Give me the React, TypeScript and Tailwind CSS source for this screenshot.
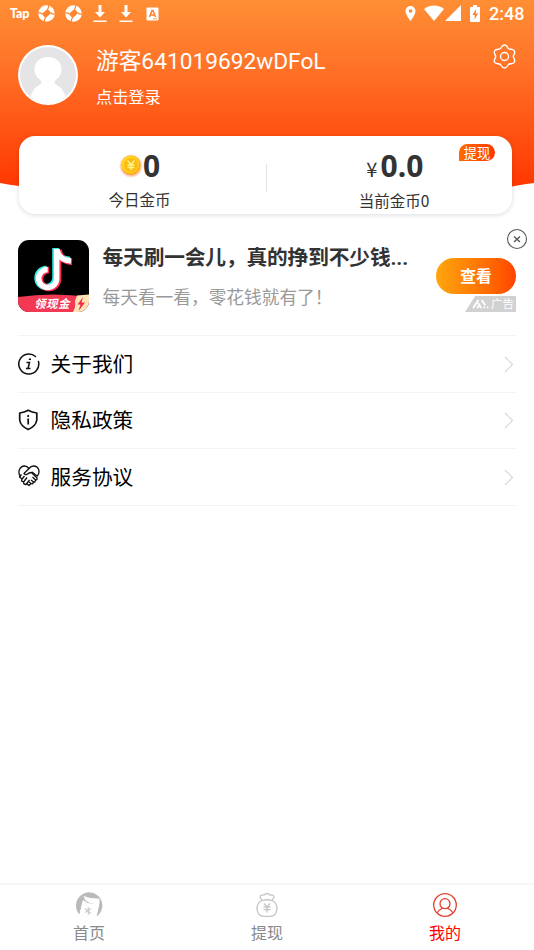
import type { ReactNode } from "react";

export default function App() {
  return (
    <div className="flex h-[950px] w-[534px] flex-col overflow-hidden bg-white font-['Roboto','Noto_Sans_CJK_SC',sans-serif]">
      <Header />
      <Balance />
      <AdCard />
      <ul className="mx-[18px] mt-[23px] border-t border-[#f3f3f3]">
        <MenuRow icon={<InfoIcon />} text="关于我们" />
        <MenuRow icon={<ShieldIcon />} text="隐私政策" />
        <MenuRow icon={<HandshakeIcon />} text="服务协议" />
      </ul>
      <nav className="mt-auto grid h-[67px] shrink-0 grid-cols-3 border-t-2 border-[#f7f7f7]">
        <NavItem icon={<HomeIcon />} text="首页" />
        <NavItem icon={<BagIcon />} text="提现" />
        <NavItem icon={<UserIcon />} text="我的" selected />
      </nav>
    </div>
  );
}

function Header() {
  return (
    <header className="relative h-[136px] shrink-0 text-white">
      <svg className="absolute top-0 left-0" width="534" height="204" viewBox="0 0 534 204">
        <defs>
          <linearGradient id="sky" x1="0" y1="0" x2="0" y2="190" gradientUnits="userSpaceOnUse">
            <stop offset="0" stopColor="#ff8e34" />
            <stop offset="0.3" stopColor="#ff772a" />
            <stop offset="1" stopColor="#ff3600" />
          </linearGradient>
        </defs>
        <path d="M0 0H534V183Q523 184 512 186.500Q267 212 19 186Q10 185 0 183Z" fill="url(#sky)" />
      </svg>
      <div className="relative flex h-[27px] items-center justify-between pr-[9px] pl-[10px]">
        <div className="flex items-center">
          <span className="w-[28px] font-['Lato',sans-serif] text-[12.500px] leading-[22px] font-black tracking-[-0.200px]">
            Tap
          </span>
          <SwirlIcon />
          <SwirlIcon />
          <DownloadIcon />
          <DownloadIcon />
          <svg width="13" height="14" viewBox="0 0 13 14">
            <rect x="0.500" y="0.500" width="12" height="13" rx="1" fill="#fff" />
            <path d="M3.500 10L6 3.500H7L9.500 10M4.500 8H8.500" fill="none" stroke="#ff7f2d" strokeWidth="1.500" />
            <path d="M7 11.800H11" stroke="#ff7f2d" strokeWidth="0.700" />
          </svg>
        </div>
        <div className="flex items-center">
          <svg width="11" height="17" viewBox="0 0 11 17">
            <path
              d="M5.500 1A5 5 0 0 0 .5 6C.5 9.800 5.500 16 5.500 16S10.500 9.800 10.500 6A5 5 0 0 0 5.500 1ZM5.500 7.800A1.800 1.800 0 1 1 5.500 4.200A1.800 1.800 0 0 1 5.500 7.800Z"
              fill="#fff"
            />
          </svg>
          <svg width="20" height="16" viewBox="0 0 20 16" className="mb-px ml-[8px]">
            <path d="M0 4Q4 .500 10 .500T20 4L10 16Z" fill="#fff" />
          </svg>
          <svg width="16" height="16" viewBox="0 0 16 16" className="mb-px ml-[1px]">
            <path d="M0 16L16 0V16Z" fill="#fff" />
          </svg>
          <svg width="10" height="17" viewBox="0 0 10 17" className="mb-px ml-[9px]">
            <path d="M3 0H7V2H9Q10 2 10 3V16Q10 17 9 17H1Q0 17 0 16V3Q0 2 1 2H3Z" fill="#fff" />
            <path d="M6 4L2.500 10H4.700V14.500L8 8.500H5.800Z" fill="#ff812d" />
          </svg>
          <span className="ml-[9px] w-[36px] text-[18px] leading-[27px] font-medium whitespace-nowrap">2:48</span>
        </div>
      </div>
      <div className="relative mt-[18px] flex pl-[18px]">
        <svg width="60" height="60" viewBox="0 0 60 60">
          <defs>
            <clipPath id="avatar">
              <circle cx="30" cy="30" r="28" />
            </clipPath>
          </defs>
          <circle cx="30" cy="30" r="30" fill="#fff" />
          <circle cx="30" cy="30" r="28" fill="#e5e5e7" />
          <g clipPath="url(#avatar)" fill="#fff">
            <path d="M30 12C38 12 43.500 17 43.500 24C43.500 30 40 33 37 36Q35.500 38 38 39.500Q46 43 49 56V60H11V56Q14 43 22 39.500Q24.500 38 23 36C20 33 16.500 30 16.500 24C16.500 17 22 12 30 12Z" />
          </g>
        </svg>
        <div className="ml-[18px] flex flex-col pt-px">
          <span className="text-[22.700px] leading-[32px]">游客641019692wDFoL</span>
          <span className="mt-[8px] text-[16.200px] leading-[24px]">点击登录</span>
        </div>
        <svg className="-mt-px mr-[17px] ml-auto" width="25" height="25" viewBox="0 0 25 25" fill="none" stroke="#fff" strokeWidth="1.400">
          <path d="M9.600 2.900Q12.500-.8 15.400 2.900Q16.500 5.600 19.300 5.200Q24 5.800 22.200 10.300Q20.500 12.500 22.200 14.700Q24 19.200 19.300 19.800Q16.500 19.400 15.400 22.100Q12.500 25.800 9.600 22.100Q8.500 19.400 5.700 19.800Q1 19.200 2.800 14.700Q4.500 12.500 2.800 10.300Q1 5.800 5.700 5.200Q8.500 5.600 9.600 2.900Z" />
          <circle cx="12.500" cy="12.500" r="4" />
        </svg>
      </div>
    </header>
  );
}

function Balance() {
  return (
    <section className="relative mr-[22px] ml-[19px] flex h-[78px] shrink-0 rounded-[16px] bg-white text-[#333] shadow-[0_1px_5px_rgba(0,0,0,0.14)]">
      <div className="flex w-[247px] flex-col items-center pt-[10px] pr-[6px]">
        <div className="flex h-[40px] items-center font-['Noto_Sans',sans-serif] text-[30px] leading-[40px] font-bold">
          <svg width="24" height="24" viewBox="0 0 24 24" className="mb-[2px]">
            <defs>
              <radialGradient id="glow">
                <stop offset="0.700" stopColor="#ffa36b" />
                <stop offset="1" stopColor="#ffa36b" stopOpacity="0" />
              </radialGradient>
            </defs>
            <circle cx="12" cy="13" r="12" fill="url(#glow)" />
            <circle cx="12" cy="12" r="9.500" fill="#ffa90b" />
            <circle cx="11.500" cy="11.500" r="8.800" fill="#ffd61d" />
            <circle cx="12" cy="12" r="7" fill="#ffb915" />
            <path d="M8.500 7.500L12 11.500L15.500 7.500M12 11.500V17M8.500 12H15.500M8.500 14.500H15.500" fill="none" stroke="#fff38a" strokeWidth="1.500" />
          </svg>
          0
        </div>
        <span className="mt-[3px] text-[15.500px] leading-[24px]">今日金币</span>
      </div>
      <div className="mt-[28px] h-[28px] w-px bg-[#e2e2e2]" />
      <div className="flex flex-1 flex-col items-center pt-[10px] pl-[9px]">
        <div className="ml-[2px] flex h-[40px] items-baseline font-['Noto_Sans',sans-serif] text-[30px] leading-[40px] font-bold">
          <span className="mr-[3px] font-['Noto_Sans_CJK_SC',sans-serif] text-[20px] leading-[20px] font-normal">¥</span>
          <span className="tracking-[0.200px]">0.0</span>
        </div>
        <span className="mt-[2px] font-['Noto_Sans_CJK_SC',sans-serif] text-[15.500px] leading-[24px]">当前金币0</span>
      </div>
      <span className="absolute top-[8px] right-[17px] h-[17px] w-[36px] rounded-[9px] rounded-bl-none bg-linear-to-r from-[#ff6a00] to-[#ff3600] text-center text-[13.200px] leading-[20px] text-white">
        提现
      </span>
    </section>
  );
}

function AdCard() {
  return (
    <section className="relative mt-[26px] flex h-[72px] shrink-0 pr-[18px] pl-[18px]">
      <div className="relative h-[72px] w-[71px] shrink-0 overflow-hidden rounded-[11px] bg-black">
        <svg width="71" height="72" viewBox="0 0 71 72">
          <g fill="none" strokeWidth="6.500">
            <path d="M37.500 8V38A9 9 0 1 1 28.500 29M37.500 9Q39 19 52 20" stroke="#25f4ee" />
            <path d="M40 10V39A9 9 0 1 1 31 30M40.500 10Q42 21 54 22" stroke="#fe2c55" />
            <path d="M38.700 9V38.500A9 9 0 1 1 29.700 29.500M39 9Q40.500 20 53 21" stroke="#fff" strokeWidth="5.500" />
          </g>
          <path d="M0 57Q35 52 71 57V72H0Z" fill="#f33853" />
          <path d="M59 55.500L71 54.500V72H55Q58 67 57 61Z" fill="#ffe4b8" />
          <path d="M65 57L59.500 64.500H62.500L60.500 71L67 62.500H63.500Z" fill="#f02d43" />
        </svg>
        <span className="absolute bottom-[-1px] left-[16px] text-[11.500px] leading-[17px] font-bold tracking-[0.500px] whitespace-nowrap text-white italic">
          领现金
        </span>
      </div>
      <div className="ml-[13.500px] flex flex-col pt-px">
        <h2 className="text-[20.700px] leading-[34px] font-bold tracking-[-0.120px] whitespace-nowrap text-[#333]">
          每天刷一会儿，真的挣到不少钱...
        </h2>
        <p className="mt-[10px] text-[17.700px] leading-[26px] whitespace-nowrap text-[#999]">每天看一看，零花钱就有了！</p>
      </div>
      <div className="mt-[18px] ml-auto flex w-[80px] flex-col items-end">
        <button className="h-[36px] w-[80px] rounded-full bg-linear-to-r from-[#ffa50d] to-[#ff4200] text-[15.700px] leading-[38px] font-bold text-white">
          查看
        </button>
        <div className="mt-[2px] flex h-[16px] w-[51px] items-center justify-end bg-[#d1d1d1] text-white [clip-path:polygon(20%_0,100%_0,100%_100%,0_100%)]">
          <svg width="17" height="10" viewBox="0 0 17 10" className="mr-[2px]">
            <g stroke="#fff" strokeWidth="1.900" strokeLinecap="round">
              <path d="M1.500 8.500L6 1.500M5.500 8.500L6.200 7.500M6.500 4.500L9 8.500M10 1.500L12.800 5.800M12.300 8.300L12.400 8.400M15.500 8.300L15.600 8.400" />
            </g>
          </svg>
          <span className="mr-[2px] text-[11.500px] leading-[17px]">广告</span>
        </div>
      </div>
      <svg className="absolute -top-[12px] right-[6px]" width="22" height="22" viewBox="0 0 22 22" fill="none" stroke="#555">
        <circle cx="11" cy="11" r="9.500" strokeWidth="1.100" />
        <path d="M8 8.500L14 14M14 8.500L8 14" strokeWidth="1.400" />
      </svg>
    </section>
  );
}

function MenuRow({ icon, text }: { icon: ReactNode; text: string }) {
  return (
    <li className="flex h-[56.500px] items-center border-b border-[#f3f3f3]">
      {icon}
      <span className="mt-[2px] ml-[10.500px] text-[20.700px] leading-[30px] text-black">{text}</span>
      <svg className="mt-px mr-[2px] ml-auto" width="10" height="17" viewBox="0 0 10 17" fill="none" stroke="#d8d8d8" strokeWidth="1.200">
        <path d="M1 1L8.500 8.500L1 16" />
      </svg>
    </li>
  );
}

function NavItem({ icon, text, selected }: { icon: ReactNode; text: string; selected?: boolean }) {
  return (
    <a className={`flex flex-col items-center pt-[6px] ${selected ? "text-[#f00]" : "text-[#8a8a8a]"}`}>
      {icon}
      <span className="text-[16px] leading-[29px]">{text}</span>
    </a>
  );
}

function SwirlIcon() {
  return (
    <svg width="17" height="17" viewBox="0 0 17 17" className="mr-[9.500px]">
      <circle cx="8.500" cy="8.500" r="8.300" fill="#fff" />
      <path d="M9.500 3.800L13.200 8L7.500 13.200L3.800 9Z" fill="#ff852f" />
      <path d="M9.500 4.200Q11 2.500 10.500 0M12.800 8Q14.500 9.500 17 9M7.500 12.800Q6 14.500 6.500 17M4.200 9Q2.500 7.500 0 8" fill="none" stroke="#ff852f" strokeWidth="1.200" />
    </svg>
  );
}

function DownloadIcon() {
  return (
    <svg width="14" height="18" viewBox="0 0 14 18" className="mr-[12.700px] ml-[1.500px] nth-[5]:ml-0" fill="#fff">
      <path d="M5.500 0H8.500V7H12L7 12.500L2 7H5.500ZM.5 15.500H13.500V17H.5Z" />
    </svg>
  );
}

function InfoIcon() {
  return (
    <svg width="22" height="22" viewBox="0 0 22 22" fill="none" stroke="#111" strokeWidth="1.500">
      <path d="M17.500 3.500A10 10 0 1 0 20.500 8.500" strokeLinecap="round" />
      <path d="M8.500 9.500H11.500L10 15.500H12.500M8 15.500H10" />
      <path d="M11 5.500H13V7H10.700Z" fill="#111" stroke="none" />
    </svg>
  );
}

function ShieldIcon() {
  return (
    <svg width="22" height="22" viewBox="0 0 22 22" fill="none" stroke="#111" strokeWidth="1.700">
      <path d="M10.200 1.300Q14 3.500 18.800 4V11Q18 17 10.200 20.500Q2.500 17 1.700 11V4Q6.500 3.500 10.200 1.300Z" strokeLinejoin="round" />
      <path d="M10.200 6V8M10.200 9.500V15.500" />
    </svg>
  );
}

function HandshakeIcon() {
  return (
    <svg width="22" height="22" viewBox="0 0 22 22" className="-mt-[2px]" fill="none" stroke="#111" strokeWidth="1.300" strokeLinejoin="round">
      <path d="M2.500 11.500C-1 7 2 1 6.500 1Q9 1 11 3.500Q13 1 15.500 1C20.500 1 23 7 19 11.500" />
      <path d="M11 3.500L6 8.500Q8 11 11 8L13.500 7.500L19 13Q19.500 15 17.500 15Q17.500 17.500 15.500 17Q15 19.500 13 18.500L11 20.500L8.500 18.500" />
      <path d="M3.500 9.500L1.500 12L4 14L6.500 11M4 14L3.500 16L5.500 17L9 12.500M5.500 17L6 19L8 19.500L11.500 15M13 15L15.500 17M14.500 12L17.500 15M11 17L13 18.500M14 7L19 11" />
    </svg>
  );
}

function HomeIcon() {
  return (
    <svg width="28" height="28" viewBox="0 0 28 28">
      <path d="M4.500 23.500A13.200 13.200 0 1 1 21.500 25.500L24 13L25 9Q16 16 8 9L4.500 23.500Z" fill="#bababa" />
      <path d="M8.500 5Q16 8 24.500 7.500Q24 12 18 12.500Q10 12 8.500 5Z" fill="#fff" />
      <path d="M8 9.500Q15 16.500 24.500 12L21.500 25.500Q12 29 4.500 23.500Z" fill="#fff" />
      <path d="M10 17.500L16 22.500M16 17.500L10 21.500M13.300 16V24" stroke="#c8c8c8" strokeWidth="1.100" />
    </svg>
  );
}

function BagIcon() {
  return (
    <svg width="28" height="28" viewBox="0 0 28 28" fill="none" stroke="#c4c4c4" strokeWidth="1.300" strokeLinejoin="round">
      <path d="M9 9.500L7 6Q7 3.500 11 4Q14 1 17 4Q21 3.500 21 6L19 9.500Q24 12 24 17.500Q23.500 25.300 17 25.300H11Q4.500 25.300 4 17.500Q4 12 9 9.500Q14 8 19 9.500" />
      <path d="M11 12.500L14 16L17 12.500M14 16V21.500M10.500 16.200H17.500M10.500 18.700H17.500" />
    </svg>
  );
}

function UserIcon() {
  return (
    <svg width="28" height="28" viewBox="0 0 28 28" fill="none" stroke="#e34232" strokeWidth="1.300">
      <circle cx="14" cy="14" r="11.300" />
      <circle cx="14" cy="12.700" r="5" />
      <path d="M6 22Q8 19 11.500 17M22 22Q20 19 16.500 17" />
    </svg>
  );
}
